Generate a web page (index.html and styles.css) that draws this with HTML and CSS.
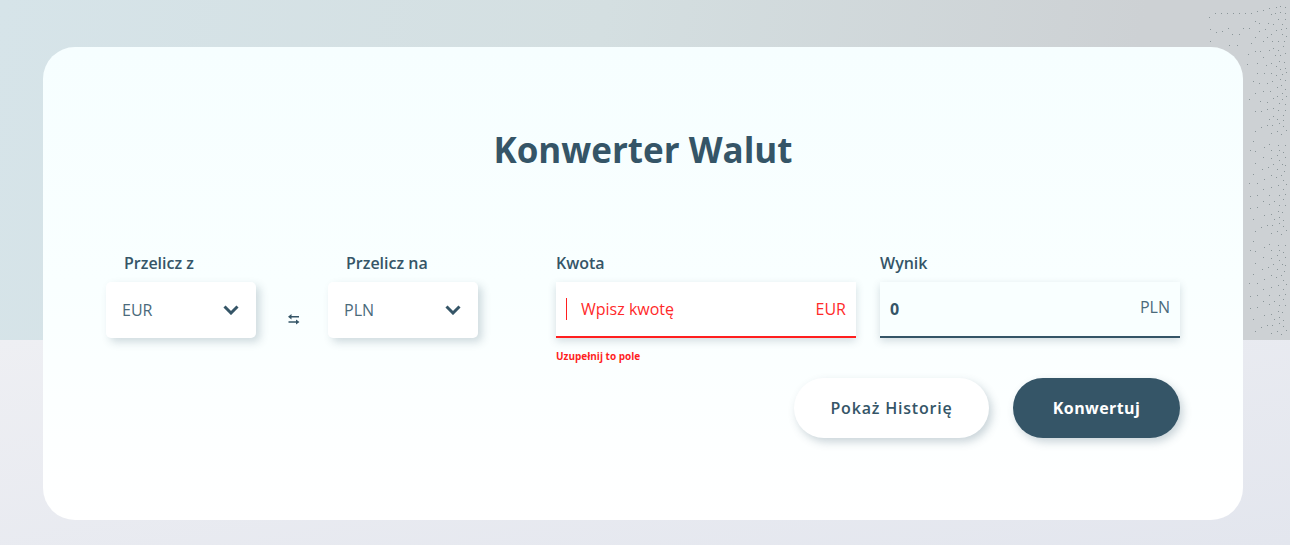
FILE: index.html
```html
<!DOCTYPE html>
<html lang="pl">
<head>
    <meta charset="UTF-8">
    <meta name="viewport" content="width=device-width, initial-scale=1.0">
    <title>Konwerter Walut</title>
    <link rel="stylesheet" href="styles.css">
</head>
<body>
    <!-- Kropki w prawym górnym rogu tła -->
    <svg class="dots" width="90" height="340" viewBox="0 0 90 340">
        <defs>
            <pattern id="dotPattern" y="40" width="90" height="100" patternUnits="userSpaceOnUse">
                <path class="dot-path" d="M53 1.5h1M69 4.5h1M64 7.5h1M78 5.5h1M85 5.5h1M50 10.5h1M55 11.5h1M71 10.5h1M79 10.5h1M83 12.5h1M77 15.5h1M63 17.5h1M71 18.5h1M85 17.5h1M79 20.5h1M55 23.5h1M73 24.5h1M82 24.5h1M85 25.5h1M68 27.5h1M62 29.5h1M77 29.5h1M84 31.5h1M53 34.5h1M71 35.5h1M81 35.5h1M76 37.5h1M64 39.5h1M83 40.5h1M49 43.5h1M57 43.5h1M78 45.5h1M86 44.5h1M71 47.5h1M63 49.5h1M83 49.5h1M69 55.5h1M79 55.5h1M57 55.5h1M50 56.5h1M85 54.5h1M83 59.5h1M63 61.5h1M74 61.5h1M69 64.5h1M79 65.5h1M85 65.5h1M57 67.5h1M50 68.5h1M78 71.5h1M82 72.5h1M71 74.5h1M64 75.5h1M79 77.5h1M53 79.5h1M74 79.5h1M83 80.5h1M79 83.5h1M67 85.5h1M72 85.5h1M61 87.5h1M83 86.5h1M55 91.5h1M77 91.5h1M86 90.5h1M71 93.5h1M81 94.5h1"/>
            </pattern>
        </defs>
        <path class="dot-path" d="M15 13.5h1M21 13.5h1M27 13.5h1M33 13.5h1M39 13.5h1M45 13.5h1M51 13.5h1M57 11.5h1M63 10.5h1M69 8.5h1M76 7.5h1M80 6.5h1M85 7.5h1M9 17.5h1M71 14.5h1M75 13.5h1M80 12.5h1M85 13.5h1M78 19.5h1M85 19.5h1M55 21.5h1M59 23.5h1M68 23.5h1M73 24.5h1M82 24.5h1M10 29.5h1M28 28.5h1M43 28.5h1M49 28.5h1M16 32.5h1M22 31.5h1M59 31.5h1M65 29.5h1M76 30.5h1M81 29.5h1M86 28.5h1M32 34.5h1M39 34.5h1M71 34.5h1M82 34.5h1M55 37.5h1M67 37.5h1M86 36.5h1M10 41.5h1M63 41.5h1M72 41.5h1M78 41.5h1M84 41.5h1M51 43.5h1M29 45.5h1M37 45.5h1M83 46.5h1M73 48.5h1M69 50.5h1M78 50.5h1M55 51.5h1M60 51.5h1M48 54.5h1M75 55.5h1M80 55.5h1M85 53.5h1M63 57.5h1M79 61.5h1M84 62.5h1M47 64.5h1M57 63.5h1M71 63.5h1M66 65.5h1M76 66.5h1M80 69.5h1M85 68.5h1M57 73.5h1M64 73.5h1M71 73.5h1M76 75.5h1M82 74.5h1M86 72.5h1M80 79.5h1M53 81.5h1M59 83.5h1M67 83.5h1M72 81.5h1M85 80.5h1M81 85.5h1M77 87.5h1M85 89.5h1M63 91.5h1M70 91.5h1M55 93.5h1M82 93.5h1M77 96.5h1M86 96.5h1M73 98.5h1M82 99.5h1M49 99.5h1M60 101.5h1M67 102.5h1M79 103.5h1M85 104.5h1M73 108.5h1M67 109.5h1M78 110.5h1M85 110.5h1M55 111.5h1M61 111.5h1M83 115.5h1M73 116.5h1M69 119.5h1M77 119.5h1"/>
        <rect class="dots-fill" y="120" width="90" height="220"/>
    </svg>

    <main class="card">
        <h1>Konwerter Walut</h1>

        <form class="converter">
            <div class="fields">
                <div class="field field-select">
                    <label for="from">Przelicz z</label>
                    <div class="select-box" id="from">
                        <span>EUR</span>
                        <svg class="chevron" width="16" height="10" viewBox="0 0 16 10"><path d="M1.5 1.5 8 8l6.5-6.5"/></svg>
                    </div>
                </div>

                <button type="button" class="swap" aria-label="Zamień waluty">
                    <svg width="12" height="11" viewBox="0 0 12 11"><path d="M0 2.7 3.5 0v2H11v1.5H3.5v2zM11.5 8 8 5.5v1.7H.5v1.6H8v1.7z"/></svg>
                </button>

                <div class="field field-select">
                    <label for="to">Przelicz na</label>
                    <div class="select-box" id="to">
                        <span>PLN</span>
                        <svg class="chevron" width="16" height="10" viewBox="0 0 16 10"><path d="M1.5 1.5 8 8l6.5-6.5"/></svg>
                    </div>
                </div>

                <div class="field field-amount">
                    <label for="amount">Kwota</label>
                    <div class="input-box input-error" id="amount">
                        <span class="caret"></span>
                        <span class="placeholder">Wpisz kwotę</span>
                        <span class="unit">EUR</span>
                    </div>
                    <p class="error-text">Uzupełnij to pole</p>
                </div>

                <div class="field field-result">
                    <label for="result">Wynik</label>
                    <div class="input-box" id="result">
                        <span class="value">0</span>
                        <span class="unit">PLN</span>
                    </div>
                </div>
            </div>

            <div class="actions">
                <button type="button" class="btn btn-light">Pokaż Historię</button>
                <button type="submit" class="btn btn-dark">Konwertuj</button>
            </div>
        </form>
    </main>
</body>
</html>
```

FILE: styles.css
```css
* {
    box-sizing: border-box;
}
html, body {
    height: 100%;
}
body {
    margin: 0;
    overflow: hidden;
    padding: 47px 47px 25px 43px;
    font-family: "Open Sans", sans-serif;
    color: #355567;
    background-color: #e9eaf0;
    background-image:
        linear-gradient(100deg, #d6e4e9 0%, #d4dfe1 45%, #cdd1d4 85%, #cdd1d4 100%),
        linear-gradient(170deg, #eeeff3 0%, #e3e6ee 100%);
    background-size: 100% 340px, 100% 205px;
    background-position: top left, bottom left;
    background-repeat: no-repeat;
}
.dots {
    position: absolute;
    top: 0;
    right: 0;
}
.dots-fill {
    fill: url(#dotPattern);
}
.dot-path {
    fill: none;
    stroke: #8b9699;
    stroke-width: 1;
}
.card {
    position: relative;
    height: 473px;
    padding: 75px 63px 0;
    border-radius: 32px;
    background: linear-gradient(180deg, #f6feff 0%, #f9ffff 50%, #ffffff 100%);
}
h1 {
    margin: 0;
    font-size: 35px;
    line-height: 56px;
    font-weight: 700;
    text-align: center;
    color: #355567;
}
.converter {
    margin-top: 74px;
}
.fields {
    display: flex;
    align-items: flex-start;
}
.field label {
    display: block;
    height: 30px;
    font-size: 16px;
    line-height: 22px;
    font-weight: 600;
    color: #355567;
}
.field-select {
    width: 150px;
}
.field-select label {
    padding-left: 18px;
}
.select-box {
    display: flex;
    align-items: center;
    justify-content: space-between;
    height: 56px;
    padding: 0 17px 0 16px;
    border-radius: 5px;
    background-color: #fff;
    box-shadow: 4px 4px 8px rgba(53, 85, 103, 0.22);
    font-size: 16px;
    color: #4b6a7b;
}
.chevron path {
    fill: none;
    stroke: #355567;
    stroke-width: 3;
}
.swap {
    width: 72px;
    height: 56px;
    margin-top: 30px;
    padding: 21px 0 0 4px;
    border: none;
    background: none;
}
.swap svg path {
    fill: #355567;
}
.field-amount {
    width: 300px;
    margin-left: 78px;
}
.field-result {
    width: 300px;
    margin-left: 24px;
}
.input-box {
    display: flex;
    align-items: center;
    height: 56px;
    padding: 0 10px;
    border-bottom: 2px solid #355567;
    background-color: #fff;
    box-shadow: 0 3px 8px rgba(53, 85, 103, 0.2);
    font-size: 16px;
}
#result {
    background-color: #f9ffff;
}
#result .unit {
    margin-bottom: 4px;
    color: #4b6a7b;
}
.input-box .unit {
    margin-left: auto;
}
.value {
    font-weight: 700;
}
.input-error {
    border-bottom-color: #ff1f1f;
    color: #ff2a2a;
}
.caret {
    width: 1px;
    height: 22px;
    background-color: #ff1f1f;
}
.placeholder {
    margin-left: 14px;
}
.error-text {
    margin: 12px 0 0;
    font-size: 10px;
    line-height: 12px;
    font-weight: 700;
    color: #ff1f1f;
}
.actions {
    display: flex;
    justify-content: flex-end;
    gap: 24px;
    margin-top: 16px;
}
.btn {
    height: 60px;
    border: none;
    border-radius: 30px;
    font-family: inherit;
    font-size: 16px;
    font-weight: 600;
    letter-spacing: 0.8px;
}
.btn-light {
    width: 195px;
    background-color: #fff;
    color: #355567;
    box-shadow: 3px 4px 8px rgba(53, 85, 103, 0.25);
}
.btn-dark {
    width: 167px;
    font-weight: 700;
    letter-spacing: 0.4px;
    background-color: #355567;
    color: #fff;
    box-shadow: 3px 4px 8px rgba(53, 85, 103, 0.25);
}
```
